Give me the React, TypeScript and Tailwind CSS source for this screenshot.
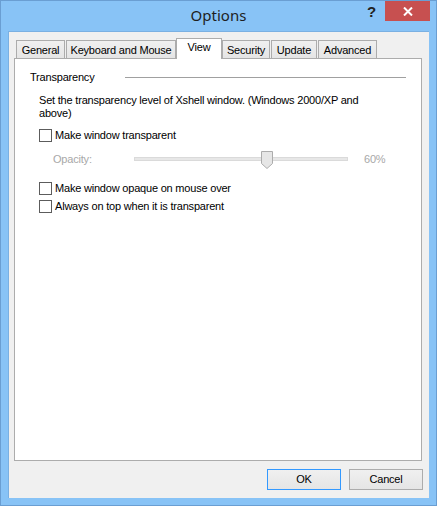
import React from "react";

const font = { fontFamily: '"Liberation Sans", Arial, sans-serif' };
const txt = "text-[11px] leading-[13px] tracking-[-0.2px] whitespace-nowrap";

function Checkbox({ label }: { label: string }) {
  return (
    <div className="flex items-center h-[13px] ml-[24px]">
      <div className="w-[13px] h-[13px] bg-white border border-[#5c5c5c] shrink-0" />
      <span className={`ml-[3px] ${txt} text-black`}>{label}</span>
    </div>
  );
}

function Tab({ label, selected, w }: { label: string; selected?: boolean; w: string }) {
  if (selected) {
    return (
      <div
        className={`${w} h-[21px] -mb-[1px] relative z-10 bg-white border border-b-0 border-[#acacac] flex justify-center pt-[2px] ${txt} text-black`}
      >
        {label}
      </div>
    );
  }
  return (
    <div
      className={`${w} h-[18px] mt-[2px] bg-gradient-to-b from-[#f0f0f0] to-[#e5e5e5] border border-b-0 border-[#acacac] flex justify-center pt-[3px] ${txt} text-black`}
    >
      {label}
    </div>
  );
}

export default function App() {
  return (
    <div
      style={font}
      className="w-[437px] h-[506px] bg-[#88c3f6] border border-[#6a9ed2] flex flex-col"
    >
      {/* title bar */}
      <div className="h-[30px] relative flex justify-center pt-[4px]">
        <span
          className="text-[15px] leading-[20px] text-[#1e1e1e]"
          style={{ fontFamily: '"Noto Sans", "Open Sans", sans-serif' }}
        >
          Options
        </span>
        <span className="absolute left-[366px] top-[1px] text-[15px] font-bold text-[#222] leading-[20px]">
          ?
        </span>
        <div className="absolute left-[384px] top-0 w-[45px] h-[20px] bg-[#c75050] flex items-center justify-center">
          <svg width="10" height="9" viewBox="0 0 10 9">
            <path d="M1 0.5 L9 8.5 M9 0.5 L1 8.5" stroke="white" strokeWidth="2" />
          </svg>
        </div>
      </div>

      {/* client */}
      <div className="flex-1 mx-[7px] mb-[7px] bg-[#f0f0f0] border-t border-l border-[#7ab0e2] flex flex-col">
        <div className="flex items-end pl-[7px] pt-[6px]">
          <Tab label="General" w="w-[49px]" />
          <div className="w-[1px]" />
          <Tab label="Keyboard and Mouse" w="w-[110px]" />
          <Tab label="View" w="w-[46px]" selected />
          <Tab label="Security" w="w-[48px]" />
          <div className="w-[1px]" />
          <Tab label="Update" w="w-[46px]" />
          <div className="w-[1px]" />
          <Tab label="Advanced" w="w-[59px]" />
        </div>

        {/* tab panel */}
        <div className="ml-[5px] w-[408px] h-[403px] bg-white border border-[#acacac] flex flex-col">
          <div className="flex items-center h-[13px] mt-[12px] ml-[15px] mr-[15px]">
            <span className={`w-[95px] ${txt} text-black`}>Transparency</span>
            <div className="flex-1 h-[1px] bg-[#a0a0a0]" />
          </div>

          <p className="mt-[10px] ml-[24px] mr-[14px] text-[11px] leading-[13px] tracking-[-0.2px] text-black">
            Set the transparency level of Xshell window. (Windows 2000/XP and
            <br />
            above)
          </p>

          <div className="mt-[9px]">
            <Checkbox label="Make window transparent" />
          </div>

          <div className="flex items-center h-[20px] mt-[7px] ml-[38px]">
            <span className={`w-[81px] ${txt} text-[#a8a8a8]`}>Opacity:</span>
            <div className="relative w-[214px] h-[20px] flex items-center">
              <div className="w-full h-[4px] bg-[#e7e7e7] border border-[#dadada]" />
              <svg
                className="absolute left-[127px] top-[2px]"
                width="12"
                height="18"
                viewBox="0 0 12 18"
              >
                <path
                  d="M0.5 0.5 H11.5 V12.5 L6 17.5 L0.5 12.5 Z"
                  fill="#e6e6e6"
                  stroke="#acacac"
                />
              </svg>
            </div>
            <span className={`ml-[16px] ${txt} text-[#a8a8a8]`}>60%</span>
          </div>

          <div className="mt-[13px]">
            <Checkbox label="Make window opaque on mouse over" />
          </div>
          <div className="mt-[5px]">
            <Checkbox label="Always on top when it is transparent" />
          </div>
        </div>

        {/* buttons */}
        <div className="flex justify-end gap-[8px] mt-[8px] mr-[6px]">
          <button className={`w-[74px] h-[21px] border border-[#3399ff] bg-gradient-to-b from-[#f0f0f0] to-[#e5e5e5] ${txt} text-black`}>
            OK
          </button>
          <button className={`w-[74px] h-[21px] border border-[#acacac] bg-gradient-to-b from-[#f0f0f0] to-[#e5e5e5] ${txt} text-black`}>
            Cancel
          </button>
        </div>
      </div>
    </div>
  );
}
